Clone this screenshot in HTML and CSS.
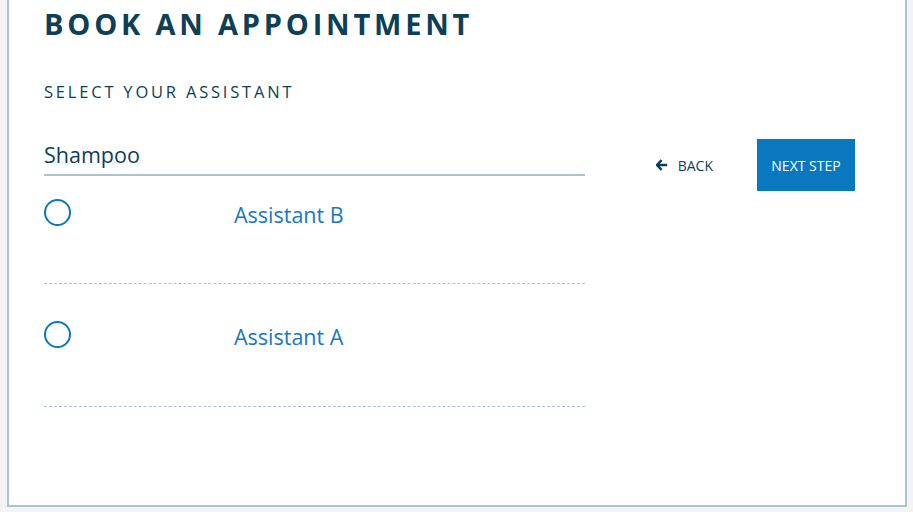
FILE: index.html
```html
<!DOCTYPE html>
<html lang="en">
<head>
  <meta charset="UTF-8">
  <title>Book an Appointment</title>
  <link rel="stylesheet" href="styles.css">
</head>
<body>

<div class="card">
  <h1 class="title">Book an Appointment</h1>
  <h2 class="step-label">Select your assistant</h2>

  <div class="step">
    <div class="form">
      <div class="service">Shampoo</div>

      <ul class="options">
        <li class="option">
          <span class="radio"></span>
          <span class="name">Assistant B</span>
        </li>
        <li class="option">
          <span class="radio"></span>
          <span class="name">Assistant A</span>
        </li>
      </ul>
    </div>

    <div class="actions">
      <a class="back" href="#">
        <svg class="back-icon" viewBox="0 0 12 12" width="12" height="12">
          <path d="M5.6 1.2 L1 6 L5.6 10.8 M1.4 6 H11.2" fill="none" stroke="#0d3f57" stroke-width="2.4" stroke-linejoin="miter"/>
        </svg>
        BACK
      </a>
      <button class="next">NEXT STEP</button>
    </div>
  </div>
</div>

</body>
</html>
```

FILE: styles.css
```css
body {
  margin: 0;
  background: #f3f3f3;
  font-family: "Open Sans", sans-serif;
  color: #0d3f57;
}

.card {
  margin: 0 6px 0 7px;
  height: 507px;
  box-sizing: border-box;
  background: #fff;
  border: 2px solid #aac4cc;
  border-top: none;
  padding: 7px 50px 0 35px;
}

.title {
  margin: 0;
  font-size: 29px;
  font-weight: 700;
  letter-spacing: 3.8px;
  line-height: 34px;
  text-transform: uppercase;
  color: #0d3f57;
}

.step-label {
  margin: 40px 0 0;
  font-size: 16.5px;
  font-weight: 400;
  letter-spacing: 2.8px;
  line-height: 22px;
  text-transform: uppercase;
  color: #0d3f57;
}

.step {
  display: flex;
  justify-content: space-between;
  margin-top: 37px;
}

.form {
  width: 541px;
}

.service {
  font-size: 21.5px;
  line-height: 30px;
  padding-bottom: 4px;
  border-bottom: 2px solid #aac4cc;
  color: #0d3f57;
}

.options {
  list-style: none;
  margin: 0;
  padding: 0;
}

.option {
  display: flex;
  align-items: flex-start;
  padding-top: 37px;
  box-sizing: border-box;
  border-bottom: 1px dashed #aac4cc;
  height: 123px;
}

.option:first-child {
  padding-top: 23px;
  height: 108px;
}

.radio {
  width: 27px;
  height: 27px;
  box-sizing: border-box;
  border: 2px solid #0a78be;
  border-radius: 50%;
}

.name {
  margin-left: 163px;
  margin-top: 1px;
  font-size: 21.5px;
  line-height: 30px;
  color: #1779bf;
}

.actions {
  display: flex;
  align-items: center;
  align-self: flex-start;
  margin-top: -1px;
}

.back {
  display: flex;
  align-items: center;
  gap: 10px;
  font-size: 14px;
  color: #0d3f57;
  text-decoration: none;
}

.back-icon {
  display: block;
}

.next {
  margin-left: 44px;
  width: 98px;
  height: 52px;
  border: none;
  background: #0a78be;
  color: #fff;
  font-family: "Open Sans", sans-serif;
  font-size: 14px;
  padding: 0;
  cursor: pointer;
}
```
